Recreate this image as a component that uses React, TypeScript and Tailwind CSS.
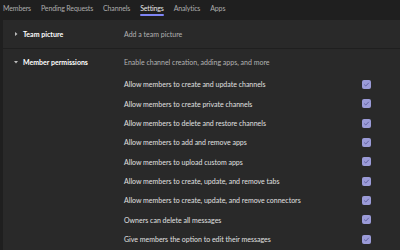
const tabs = ['Members', 'Pending Requests', 'Channels', 'Settings', 'Analytics', 'Apps']

const perms = [
    'Allow members to create and update channels',
    'Allow members to create private channels',
    'Allow members to delete and restore channels',
    'Allow members to add and remove apps',
    'Allow members to upload custom apps',
    'Allow members to create, update, and remove tabs',
    'Allow members to create, update, and remove connectors',
    'Owners can delete all messages',
    'Give members the option to edit their messages',
]

function Caret({ open }: { open?: boolean }) {
    return (
        <svg width="4" height="4" viewBox="0 0 4 4" className="shrink-0">
            {open ? <path d="M0 1 L4 1 L2 3.5 Z" fill="#bdbdbd" /> : <path d="M1 0 L3.5 2 L1 4 Z" fill="#bdbdbd" />}
        </svg>
    )
}

function Check() {
    return (
        <div className="w-[9px] h-[9px] rounded-[2px] bg-[#9b9bd8] flex items-center justify-center">
            <svg width="7" height="7" viewBox="0 0 7 7">
                <path d="M1.2 3.6 L2.8 5 L5.8 1.8" stroke="#5b5b9a" strokeWidth="0.9" fill="none" />
            </svg>
        </div>
    )
}

export default function App() {
    return (
        <div className="w-[400px] h-[250px] bg-[#1f1f1f] overflow-hidden font-['Lato',sans-serif]">
            <div className="h-5 flex items-start pl-[3px] gap-[10px] text-[7px] tracking-[-0.15px] text-[#adadad]">
                {tabs.map((t) => (
                    <div key={t} className="flex flex-col items-stretch pt-[3px]">
                        <span className={t === 'Settings' ? 'text-[#e6e6e6] leading-[10px]' : 'leading-[10px]'}>{t}</span>
                        {t === 'Settings' && <div className="h-[2px] bg-[#7f85f5] rounded-full mt-px" />}
                    </div>
                ))}
            </div>
            <div className="ml-[3px] bg-[#292929] h-[230px]">
                <div className="h-[28px] flex items-center text-[7px]">
                    <div className="w-[121px] flex items-center pl-[11px] gap-[5px]">
                        <Caret />
                        <span className="font-bold text-white">Team picture</span>
                    </div>
                    <span className="text-[#b3b3b3]">Add a team picture</span>
                </div>
                <div className="h-px bg-[#1f1f1f]" />
                <div className="h-[26px] flex items-center text-[7px]">
                    <div className="w-[121px] flex items-center pl-[11px] gap-[5px]">
                        <Caret open />
                        <span className="font-bold text-white">Member permissions</span>
                    </div>
                    <span className="text-[#b3b3b3]">Enable channel creation, adding apps, and more</span>
                </div>
                {perms.map((p) => (
                    <div key={p} className="h-[19.33px] flex items-center pl-[121px] pr-[29px] text-[7px] text-[#e0e0e0]">
                        <span className="flex-1">{p}</span>
                        <Check />
                    </div>
                ))}
            </div>
        </div>
    )
}
